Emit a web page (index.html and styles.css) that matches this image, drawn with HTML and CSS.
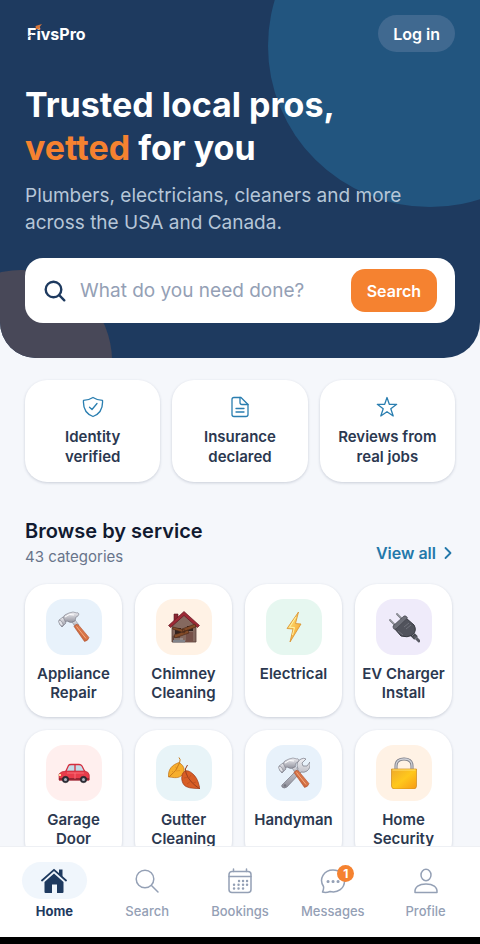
FILE: index.html
```html
<!DOCTYPE html>
<html lang="en">
	<head>
		<meta charset="utf-8">
		<meta name="viewport" content="width=device-width, initial-scale=1">
		<title>FivsPro</title>
		<link rel="stylesheet" href="styles.css">
	</head>
	<body>
		<main class="content">
			<header class="hero">
				<div class="topbar">
					<a class="logo" href="#">
						FivsPro
						<svg class="logo-mark" viewBox="0 0 20 18">
							<path d="M0 13.500 L6 10.800" stroke="#1e3a5f" stroke-width=".8"/>
							<path d="M9.500 2 L16 0 L14 2.500 L13.500 6 L11.500 5 L10 5 Z" fill="#d9773a"/>
						</svg>
					</a>
					<button class="login" type="button">Log in</button>
				</div>
				<h1 class="title">Trusted local pros,<br><span class="accent">vetted</span> for you</h1>
				<p class="lead">Plumbers, electricians, cleaners and more across the USA and Canada.</p>
				<form class="search" onsubmit="return false">
					<label class="search-label" for="query" aria-label="Search">
						<svg class="search-icon" viewBox="0 0 22 22" fill="none" stroke="#1e3a5f" stroke-width="2.400" stroke-linecap="round">
							<circle cx="9.500" cy="9.500" r="7.800"/>
							<path d="M15.200 15.200 L20.300 20.300"/>
						</svg>
					</label>
					<input class="search-input" id="query" type="text" placeholder="What do you need done?">
					<button class="search-button" type="submit">Search</button>
				</form>
			</header>

			<section class="trust">
				<div class="trust-card">
					<svg class="trust-icon" viewBox="0 0 22 22">
						<path d="M11 1.500 C8 3.500 5 4.200 1.500 4.300 C1 11.500 3 17.500 11 20.500 C19 17.500 21 11.500 20.500 4.300 C17 4.200 14 3.500 11 1.500 Z"/>
						<path d="M7.500 11.300 L10 13.500 L15 7.500"/>
					</svg>
					<span>Identity verified</span>
				</div>
				<div class="trust-card">
					<svg class="trust-icon" viewBox="0 0 22 22">
						<path d="M12 1.500 H5 Q3 1.500 3 3.500 V18.500 Q3 20.500 5 20.500 H17 Q19 20.500 19 18.500 V8.500 Z"/>
						<path d="M11 1.500 V6.500 Q11 8.500 13 8.500 H19 M7 12.500 H15 M7 16 H15"/>
					</svg>
					<span>Insurance declared</span>
				</div>
				<div class="trust-card">
					<svg class="trust-icon" viewBox="0 0 22 22">
						<path d="M11 1.500 L13.300 8.300 H20.700 L14.800 12.700 L17.200 20 L11 15.700 L4.800 20 L7.200 12.700 L1.300 8.300 H8.700 Z"/>
					</svg>
					<span>Reviews from real jobs</span>
				</div>
			</section>

			<section class="services">
				<div class="services-head">
					<div>
						<h2 class="services-title">Browse by service</h2>
						<p class="services-count">43 categories</p>
					</div>
					<a class="view-all" href="#">View all
						<svg class="chevron" viewBox="0 0 8 14"><path d="M1.500 2 L6.500 7 L1.500 12"/></svg>
					</a>
				</div>

				<div class="grid">
					<a class="service" href="#">
						<span class="tile blue">
							<svg viewBox="0 0 32 32">
								<defs>
									<linearGradient id="steel" x1="0" y1="0" x2="0" y2="1"><stop offset="0" stop-color="#f1f1f5"/><stop offset="1" stop-color="#8c8d98"/></linearGradient>
									<linearGradient id="wood" x1="0" y1="1" x2="1" y2="0"><stop offset="0" stop-color="#b94f26"/><stop offset="1" stop-color="#ee9263"/></linearGradient>
								</defs>
								<g id="hammer">
									<path d="M14 11 L17 9 L21 14 L18 17 Z" fill="url(#steel)" stroke="#777984" stroke-width=".5"/>
									<path d="M16 15.500 Q18 12 20.500 14 L31 26.500 Q30 30 26.500 30.500 Z" fill="url(#wood)" stroke="#a44725" stroke-width=".5"/>
									<path d="M18.500 15.500 L28 27.500" stroke="#f6ac80" stroke-width="1"/>
									<path d="M4 8 Q6 3 11 2 Q15 0 19 2 Q20 1 21 3 Q20 6 18 6 L17 10 Q13 13 9 10 L6 12 Z" fill="url(#steel)" stroke="#777984" stroke-width=".6"/>
									<path d="M1 9 L5 6 L8 12 L4 16 Q1 14 1 9 Z" fill="url(#steel)" stroke="#777984" stroke-width=".6"/>
									<ellipse cx="2.800" cy="12" rx="1.500" ry="3.300" transform="rotate(-32 3 12)" fill="#e3e4e9" stroke="#777984" stroke-width=".5"/>
									<path d="M7 6 Q11 2 16 4" fill="none" stroke="#fff" stroke-width="1"/>
								</g>
							</svg>
						</span>
						<span class="service-name">Appliance Repair</span>
					</a>
					<a class="service" href="#">
						<span class="tile orange">
							<svg viewBox="0 0 32 32">
								<path d="M6 3 H10 V11 H6 Z" fill="#8b2631" stroke="#591922" stroke-width=".6"/>
								<path d="M4 15 L16 4 L28 15 V31 H4 Z" fill="#85695f" stroke="#563e38" stroke-width=".8"/>
								<path d="M0.500 14.500 L16 0.500 L31.500 14.500 L29.500 16.500 L16 4.500 L2.500 16.500 Z" fill="#9e2935" stroke="#631923" stroke-width=".7"/>
								<path d="M4.500 25 H12 V31 H4.500 Z" fill="#62463d"/>
								<path d="M18 21 H25 V31 H18 Z" fill="#755048"/>
								<path d="M7 17 H13 V23 H7 Z M19 15 H25 V20 H19 Z" fill="#33231f"/>
								<path d="M5 16 L17 19 L16.500 22 L4.500 18 Z M14 18 L27 13 L28 16 L15 21 Z M6 24 L20 19 L21 22 L7 27 Z" fill="#834b28" stroke="#472718" stroke-width=".6"/>
								<path d="M5 29 H17 V31.500 H5 Z" fill="#81838a"/>
								<path d="M6 28 H15" stroke="#a8a9ac"/>
							</svg>
						</span>
						<span class="service-name">Chimney Cleaning</span>
					</a>
					<a class="service" href="#">
						<span class="tile green">
							<svg viewBox="0 0 32 32">
								<defs><linearGradient id="bolt" x1="0" x2="1" y2="1"><stop offset="0" stop-color="#fff18b"/><stop offset="1" stop-color="#f4971e"/></linearGradient></defs>
								<path d="M20.500 1 L9 17.500 L15 18 L12 31 L23 13 L17.500 12.500 Z" fill="url(#bolt)" stroke="#d98f2c" stroke-width=".8" stroke-linejoin="round"/>
								<path d="M18 6 L11.500 16.300 L16.500 16.500 L14.500 24" fill="none" stroke="#fff2a2" stroke-width="1"/>
							</svg>
						</span>
						<span class="service-name">Electrical</span>
					</a>
					<a class="service" href="#">
						<span class="tile purple">
							<svg viewBox="0 0 32 32">
								<path d="M2 9 L8 15 M9 3 L15 9" stroke="#73757e" stroke-width="1.800" stroke-linecap="round"/>
								<path d="M2 8.500 L7 13.500 M9 2.500 L14 7.500" stroke="#c2c3c9" stroke-width=".8"/>
								<path d="M24 23 L28 27" stroke="#44464e" stroke-width="5"/>
								<path d="M27 26 L31 30" stroke="#595b64" stroke-width="3" stroke-linecap="round"/>
								<path d="M6 17 L18 7 L26 14 Q29 19 25 24 Q19 27 13 25 Z" fill="#51535c" stroke="#34363d"/>
								<path d="M5 15 L16 5 Q18 4 19.500 7 L8 18 Q5 19 5 15 Z" fill="#6e7079" stroke="#42444c" stroke-width=".7"/>
								<path d="M16 16 L21 12 M18 18 L23 14 M10 20 L15 24" stroke="#777983" stroke-width=".8"/>
								<path d="M24 25 L27 22 M27 28 L30 26" stroke="#858791" stroke-width=".8"/>
							</svg>
						</span>
						<span class="service-name">EV Charger Install</span>
					</a>
					<a class="service" href="#">
						<span class="tile red">
							<svg viewBox="0 0 32 32">
								<path d="M7.500 15 L10.500 8.500 Q11 7.500 13 7.500 H21 Q23 7.500 24 9 L27 15 Z" fill="#c4dce8" stroke="#d52d3e" stroke-width="1.300"/>
								<path d="M17 7.500 V15" stroke="#d52d3e" stroke-width="1.300"/>
								<path d="M1 17 Q3 14 9 14 H27 Q31 15 31.300 18 V23 H1 Z" fill="#e83c4b" stroke="#b4202f" stroke-width=".6"/>
								<path d="M1 21 H31 V23.500 H1 Z" fill="#982432"/>
								<path d="M9 16 H26 M17 16 V22" stroke="#ff7780" stroke-width=".8"/>
								<g fill="#30313a" stroke="#17181e" stroke-width=".5"><circle cx="7.500" cy="22.500" r="3.200"/><circle cx="25.500" cy="22.500" r="3.200"/></g>
								<g fill="#b3b7c1"><circle cx="7.500" cy="22.500" r="1.500"/><circle cx="25.500" cy="22.500" r="1.500"/></g>
								<path d="M1 17 H3 V19 H1 Z" fill="#ffe29a"/>
							</svg>
						</span>
						<span class="service-name">Garage Door</span>
					</a>
					<a class="service" href="#">
						<span class="tile teal">
							<svg viewBox="0 0 32 32">
								<path d="M0.500 20 C0 12 4 8 11 5.500 C17 9 18 15 13 19 C9 22 4 20 0.500 20 Z" fill="#f7ae2c" stroke="#bd7019" stroke-width=".7"/>
								<path d="M11 .5 Q13 2 11.500 6 Q9 14 1 20" fill="none" stroke="#c77a1c" stroke-width="1"/>
								<path d="M10 11 L7 10 M8 14 L12 13.500 M6 16 L4 14" fill="none" stroke="#db8a21" stroke-width=".6"/>
								<path d="M17 14 C12 17 13 27 18 29.500 C23 32 28 31 32 32 C31 28 30 22 26 18 C23 15 20 13 17 14 Z" fill="#d85d25" stroke="#9b391a" stroke-width=".7"/>
								<path d="M19.500 8 Q16 12 18 16 Q21 25 32 32" fill="none" stroke="#993e1d" stroke-width="1"/>
								<path d="M20 20 L16 21 M23 24 L19 27 M21 21 L23 18 M25 26 L28 25" fill="none" stroke="#b5481e" stroke-width=".6"/>
							</svg>
						</span>
						<span class="service-name">Gutter Cleaning</span>
					</a>
					<a class="service" href="#">
						<span class="tile blue">
							<svg viewBox="0 0 32 32">
								<path d="M5 27 L20 12 Q17 5 23 2 Q26 0.500 28 2 L24 6 L25 9 L29 9 L32 5 Q33 11 29 14 Q26 16 23 15 L9 30 Q6 32 4 30 Q3 28 5 27 Z" fill="url(#steel)" stroke="#777984" stroke-width=".7"/>
								<circle cx="7" cy="28.500" r="1.200" fill="#73757e"/>
								<use href="#hammer"/>
							</svg>
						</span>
						<span class="service-name">Handyman</span>
					</a>
					<a class="service" href="#">
						<span class="tile orange">
							<svg viewBox="0 0 32 32">
								<defs><linearGradient id="brass" x1="0" x2="1" y2="1"><stop offset="0" stop-color="#efa92a"/><stop offset=".5" stop-color="#ffc81c"/><stop offset="1" stop-color="#f79a14"/></linearGradient></defs>
								<path d="M8 14 V9 Q8 2 16 2 Q24 2 24 9 V14" fill="none" stroke="#777984" stroke-width="3"/>
								<path d="M8 13 V9 Q8 2 16 2 Q24 2 24 9 V13" fill="none" stroke="#d0d2d8" stroke-width="1.300"/>
								<path d="M3.500 12 H28.500 V29 Q28.500 32 25 32 H7 Q3.500 32 3.500 29 Z" fill="url(#brass)" stroke="#cb891e" stroke-width=".7"/>
								<path d="M4.500 13 H27.500" stroke="#ffe172"/>
							</svg>
						</span>
						<span class="service-name">Home Security</span>
					</a>
				</div>
			</section>
		</main>

		<nav class="tabs">
			<a class="tab active" href="#">
				<span class="tab-icon">
					<svg viewBox="0 0 26 26">
						<path d="M3.500 14 L13 5.500 L22.500 14 V24 Q22.500 25 21.500 25 H16 V16.500 H11 V25 H4.500 Q3.500 25 3.500 24 Z" fill="#1e3a5f" stroke="none"/>
						<path d="M18 1.500 H21.500 V9 L18 6 Z" fill="#1e3a5f" stroke="none"/>
						<path d="M1 12.500 L13 1.800 L25 12.500" stroke="#1e3a5f" stroke-width="1.800"/>
					</svg>
				</span>
				Home
			</a>
			<a class="tab" href="#">
				<span class="tab-icon">
					<svg viewBox="0 0 26 26"><circle cx="11" cy="11" r="8.800"/><path d="M17.500 17.500 L24 24"/></svg>
				</span>
				Search
			</a>
			<a class="tab" href="#">
				<span class="tab-icon">
					<svg viewBox="0 0 26 26">
						<rect x="2" y="3.500" width="22" height="21" rx="3"/>
						<path d="M2 8.500 H24 M6.500 1 V3.500 M19.500 1 V3.500"/>
						<path d="M12 13 H12.100 M16 13 H16.100 M20 13 H20.100 M7 16.800 H7.100 M11.500 16.800 H11.600 M16 16.800 H16.100 M20 16.800 H20.100 M7 20.500 H7.100 M11.500 20.500 H11.600 M16 20.500 H16.100" stroke-width="2.400"/>
					</svg>
				</span>
				Bookings
			</a>
			<a class="tab" href="#">
				<span class="tab-icon">
					<svg viewBox="0 0 26 26">
						<path d="M2.500 24 Q4 21 3.500 18.500 C-1.500 11 4 2 13 2 C20 2 24.500 7 24.500 13 C24.500 20 18 25.500 10 23.500 Q6 25 2.500 24 Z"/>
						<path d="M8 13.500 H8.100 M13 13.500 H13.100 M18 13.500 H18.100" stroke-width="3"/>
					</svg>
					<span class="badge">1</span>
				</span>
				Messages
			</a>
			<a class="tab" href="#">
				<span class="tab-icon">
					<svg viewBox="0 0 26 26"><ellipse cx="13" cy="7" rx="5" ry="5.700"/><path d="M2 24.500 C1.500 19 6 16 13 16 C20 16 24.500 19 24 24.500 Z"/></svg>
				</span>
				Profile
			</a>
		</nav>
	</body>
</html>
```
FILE: styles.css
```css
* {
	box-sizing: border-box;
}

body {
	margin: 0;
	height: 100vh;
	display: flex;
	flex-direction: column;
	background: #f5f7fb;
	color: #2b3850;
	font-family: Inter, "Liberation Sans", sans-serif;
}

a {
	color: inherit;
	text-decoration: none;
}

button {
	border: 0;
	font-family: inherit;
	color: #fff;
	font-weight: 600;
}

h1, h2, p {
	margin: 0;
}

.content {
	flex: 1;
	min-height: 0;
	overflow-y: auto;
	scrollbar-width: none;
}

/* hero */
.hero {
	position: relative;
	isolation: isolate;
	overflow: hidden;
	padding: 15px 25px 35px;
	border-radius: 0 0 36px 36px;
	background: #1e3a5f;
	color: #fff;
}

.hero::before, .hero::after {
	content: "";
	position: absolute;
	z-index: -1;
	border-radius: 50%;
}

.hero::before {
	top: -115px;
	right: -112px;
	width: 324px;
	height: 322px;
	background: #22557f;
}

.hero::after {
	left: -70px;
	bottom: -94px;
	width: 182px;
	height: 182px;
	background: #484858;
}

.topbar {
	display: flex;
	align-items: center;
	justify-content: space-between;
}

.logo {
	position: relative;
	padding-left: 2px;
	font-size: 16px;
	line-height: 20px;
	font-weight: 700;
}

.logo-mark {
	position: absolute;
	left: 1px;
	top: 0;
	width: 20px;
	height: 18px;
}

.login {
	height: 37px;
	padding: 0 15px;
	border-radius: 19px;
	background: #406990;
	font-size: 16px;
}

.title {
	margin-top: 31px;
	font-size: 34px;
	line-height: 43px;
	font-weight: 700;
}

.accent {
	color: #f58230;
}

.lead {
	margin-top: 13px;
	font-size: 19px;
	line-height: 27px;
	color: #b6c6d8;
}

.search {
	display: flex;
	align-items: center;
	height: 65px;
	margin-top: 22px;
	padding: 0 18px 0 19px;
	border-radius: 18px;
	background: #fff;
}

.search-label {
	display: flex;
}

.search-icon {
	width: 22px;
	height: 22px;
}

.search-input {
	flex: 1;
	min-width: 0;
	padding: 0 14px;
	border: 0;
	outline: 0;
	background: none;
	font-family: inherit;
	font-size: 19px;
	color: #1e3a5f;
}

.search-input::placeholder {
	color: #94a0b5;
}

.search-button {
	height: 43px;
	padding: 0 16px;
	border-radius: 14px;
	background: #f58230;
	font-size: 16px;
}

/* trust cards */
.trust {
	display: grid;
	grid-template-columns: repeat(3, 1fr);
	gap: 12px;
	padding: 22px 25px 0;
}

.trust-card {
	display: flex;
	flex-direction: column;
	align-items: center;
	gap: 9px;
	padding: 16px 16px 15px;
	border-radius: 22px;
	background: #fff;
	box-shadow: 0 1px 3px rgba(30, 45, 80, 0.2);
	font-size: 15px;
	line-height: 20px;
	font-weight: 600;
	text-align: center;
}

.trust-icon {
	width: 22px;
	height: 22px;
	fill: none;
	stroke: #2a7eb0;
	stroke-width: 1.3;
	stroke-linecap: round;
	stroke-linejoin: round;
}

/* services */
.services {
	padding: 34px 28px 20px 25px;
}

.services-head {
	display: flex;
	align-items: flex-end;
	justify-content: space-between;
}

.services-title {
	font-size: 20px;
	line-height: 30px;
	font-weight: 600;
	color: #111a30;
}

.services-count {
	font-size: 15px;
	line-height: 22px;
	color: #68748a;
}

.view-all {
	display: flex;
	align-items: center;
	gap: 8px;
	padding-bottom: 4px;
	font-size: 16px;
	line-height: 22px;
	font-weight: 600;
	color: #2478aa;
}

.chevron {
	width: 8px;
	height: 14px;
	fill: none;
	stroke: currentColor;
	stroke-width: 1.8;
	stroke-linecap: round;
	stroke-linejoin: round;
}

.grid {
	display: grid;
	grid-template-columns: repeat(4, 1fr);
	gap: 13px;
	margin-top: 16px;
}

.service {
	display: flex;
	flex-direction: column;
	align-items: center;
	gap: 9px;
	padding: 15px 4px;
	border-radius: 22px;
	background: #fff;
	box-shadow: 0 1px 3px rgba(30, 45, 80, 0.2);
}

.service-name {
	font-size: 15px;
	line-height: 19px;
	font-weight: 600;
	text-align: center;
}

.tile {
	display: flex;
	align-items: center;
	justify-content: center;
	width: 56px;
	height: 56px;
	border-radius: 18px;
}

.tile svg {
	width: 32px;
	height: 32px;
}

.blue {
	background: #e8f2fb;
}

.orange {
	background: #fff2e5;
}

.green {
	background: #e6f7f0;
}

.purple {
	background: #efebfa;
}

.red {
	background: #ffefee;
}

.teal {
	background: #e8f4f8;
}

/* bottom tabs */
.tabs {
	display: flex;
	padding: 15px 8px 17px;
	border-top: 1px solid #eef0f4;
	border-bottom: 7px solid #000;
	background: #fff;
}

.tab {
	flex: 1;
	display: flex;
	flex-direction: column;
	align-items: center;
	gap: 3px;
	font-size: 13px;
	line-height: 18px;
	font-weight: 500;
	color: #94a0b5;
}

.tab-icon {
	position: relative;
	display: flex;
	align-items: center;
	justify-content: center;
	width: 65px;
	height: 37px;
	border-radius: 19px;
}

.tab-icon svg {
	width: 26px;
	height: 26px;
	fill: none;
	stroke: #94a0b5;
	stroke-width: 1.5;
	stroke-linecap: round;
	stroke-linejoin: round;
}

.active {
	color: #1e3a5f;
	font-weight: 700;
}

.active .tab-icon {
	background: #f0f6fc;
}

.badge {
	position: absolute;
	top: 3px;
	right: 11px;
	width: 17px;
	height: 17px;
	border-radius: 50%;
	background: #f58230;
	color: #fff;
	font-size: 12px;
	line-height: 17px;
	font-weight: 700;
	text-align: center;
}
```
